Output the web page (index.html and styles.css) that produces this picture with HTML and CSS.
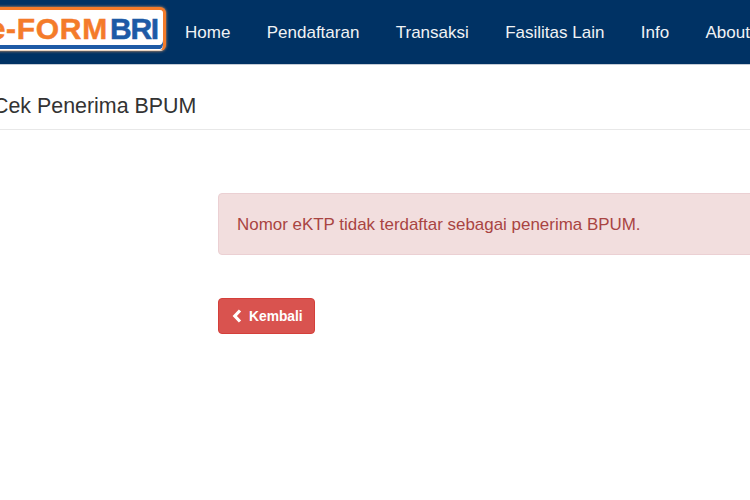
FILE: index.html
```html
<!DOCTYPE html>
<html lang="id">
<head>
    <meta charset="UTF-8">
    <title>Cek Penerima BPUM</title>
    <link rel="stylesheet" href="styles.css">
</head>
<body>

<header class="navbar">
    <a class="logo" href="#"><span class="logo-orange">e-FORM</span><span class="logo-blue">BRI</span></a>
    <nav class="nav-links">
        <a href="#">Home</a>
        <a href="#">Pendaftaran</a>
        <a href="#">Transaksi</a>
        <a href="#">Fasilitas Lain</a>
        <a href="#">Info</a>
        <a href="#">About</a>
    </nav>
</header>

<div class="page-title">
    <h1>Cek Penerima BPUM</h1>
</div>

<main class="content">
    <div class="alert">Nomor eKTP tidak terdaftar sebagai penerima BPUM.</div>
    <a class="btn-back" href="#">
        <svg class="chevron" width="10" height="14" viewBox="0 0 10 14"><path d="M8 1.5 L2.8 7 L8 12.5" fill="none" stroke="#fff" stroke-width="3.2"/></svg>
        Kembali
    </a>
</main>

</body>
</html>
```

FILE: styles.css
```css
body {
    margin: 0;
    height: 500px;
    overflow: hidden;
    background-color: #fff;
    font-family: "Liberation Sans", Arial, sans-serif;
    color: #333;
}

.navbar {
    display: flex;
    align-items: center;
    height: 64px;
    border-bottom: 1px solid #c5ccd6;
    background-color: #003264;
    overflow: hidden;
    white-space: nowrap;
}

.logo {
    display: block;
    flex: none;
    box-sizing: border-box;
    width: 186px;
    height: 44px;
    margin: -6px 0 0 -20px;
    padding-right: 5px;
    border: 3px solid #f47b2a;
    border-bottom: 1px solid #e9d3c0;
    border-radius: 6px;
    background-color: #fff;
    box-shadow: inset 0 -1px 0 #fff, inset 0 -5px 0 #1d5aa6, 0 0 3px #f2a25f;
    font-size: 30px;
    font-weight: bold;
    line-height: 37px;
    text-align: right;
    text-decoration: none;
    -webkit-text-stroke: 0.5px;
}

.logo-orange {
    color: #f47b2a;
    letter-spacing: 0.7px;
}

.logo-blue {
    margin-left: 2px;
    color: #1d5aa6;
    letter-spacing: -1.2px;
}

.nav-links {
    display: flex;
    margin-left: 0.8px;
}

.nav-links a {
    padding: 2px 18.2px 0;
    color: #f0f2f5;
    font-size: 17px;
    text-decoration: none;
}

.page-title {
    height: 64px;
    border-bottom: 1px solid #e8e8e8;
}

.page-title h1 {
    margin: 0 0 0 -7px;
    padding-top: 27px;
    font-size: 21.4px;
    font-weight: normal;
    line-height: 28px;
}

.content {
    padding: 63px 0 0 218px;
}

.alert {
    box-sizing: border-box;
    width: 560px;
    height: 62px;
    padding: 0 18px;
    border: 1px solid #ebd0d3;
    border-radius: 4px;
    background-color: #f2dede;
    color: #a94442;
    font-size: 16.95px;
    line-height: 61px;
}

.btn-back {
    display: flex;
    align-items: center;
    gap: 7px;
    box-sizing: border-box;
    width: 97px;
    height: 36px;
    margin-top: 43px;
    padding-left: 13px;
    border: 1px solid #d43f3a;
    border-radius: 4px;
    background-color: #d9534f;
    color: #fff;
    font-size: 13.8px;
    font-weight: bold;
    text-decoration: none;
}
```
